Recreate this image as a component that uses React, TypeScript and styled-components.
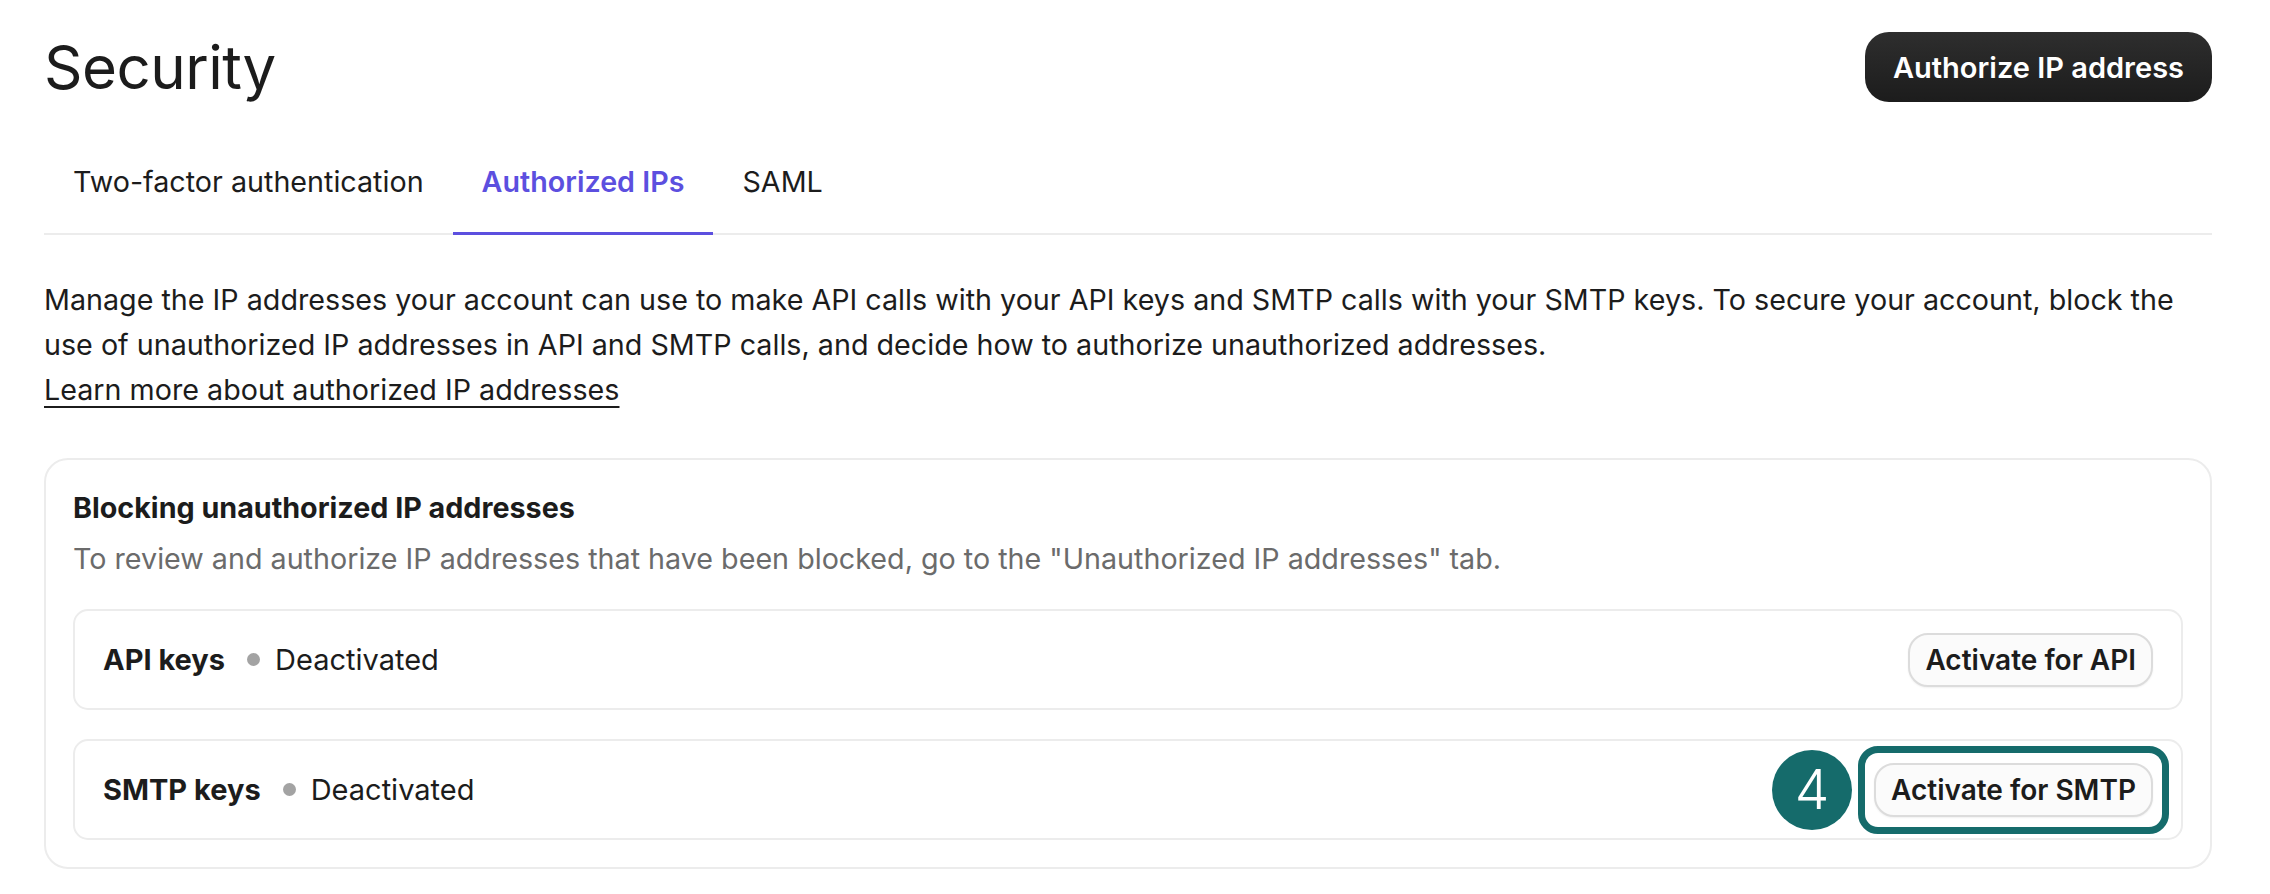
import React from 'react'
import styled, { createGlobalStyle } from 'styled-components'

const GlobalStyle = createGlobalStyle`
  html, body {
    margin: 0;
    padding: 0;
    background: #ffffff;
  }
  body {
    font-family: Inter, 'Noto Sans', 'Liberation Sans', sans-serif;
    color: #1c1c1c;
    -webkit-font-smoothing: antialiased;
  }
  * {
    box-sizing: border-box;
  }
`

const teal = '#156b6b'
const purple = '#5c4fdf'
const textSize = '28.7px'

interface TabProps {
  $active?: boolean
}

interface KeyRowProps {
  label: string
  status: string
  action: string
  step?: number
}

const tabs = ['Two-factor authentication', 'Authorized IPs', 'SAML']

const keyRows: KeyRowProps[] = [
  { label: 'API keys', status: 'Deactivated', action: 'Activate for API' },
  { label: 'SMTP keys', status: 'Deactivated', action: 'Activate for SMTP', step: 4 },
]

const KeyRow: React.FC<KeyRowProps> = ({ label, status, action, step }) => {
  return (
    <StyledRow>
      <StyledRowInfo>
        <StyledRowLabel>{label}</StyledRowLabel>
        <StyledDot />
        <StyledStatus>{status}</StyledStatus>
      </StyledRowInfo>
      <StyledActionWrap>
        {step !== undefined && (
          <>
            <StyledStepBadge>{step}</StyledStepBadge>
            <StyledHighlight />
          </>
        )}
        <StyledSecondaryButton>{action}</StyledSecondaryButton>
      </StyledActionWrap>
    </StyledRow>
  )
}

const App: React.FC = () => {
  return (
    <StyledPage>
      <GlobalStyle />
      <StyledHeader>
        <StyledTitle>Security</StyledTitle>
        <StyledPrimaryButton>Authorize IP address</StyledPrimaryButton>
      </StyledHeader>

      <StyledTabs>
        {tabs.map((tab) => (
          <StyledTab key={tab} $active={tab === 'Authorized IPs'}>
            {tab}
          </StyledTab>
        ))}
      </StyledTabs>

      <StyledIntro>
        Manage the IP addresses your account can use to make API calls with your API keys and SMTP
        calls with your SMTP keys. To secure your account, block the use of unauthorized IP
        addresses in API and SMTP calls, and decide how to authorize unauthorized addresses.
      </StyledIntro>
      <StyledLink href="#">Learn more about authorized IP addresses</StyledLink>

      <StyledCard>
        <StyledCardTitle>Blocking unauthorized IP addresses</StyledCardTitle>
        <StyledCardSubtitle>
          To review and authorize IP addresses that have been blocked, go to the "Unauthorized IP
          addresses" tab.
        </StyledCardSubtitle>
        <StyledRows>
          {keyRows.map((row) => (
            <KeyRow key={row.label} {...row} />
          ))}
        </StyledRows>
      </StyledCard>
    </StyledPage>
  )
}

const StyledPage = styled.div`
  padding: 32px 58px 0 44px;
`

const StyledHeader = styled.div`
  align-items: center;
  display: flex;
  justify-content: space-between;
  height: 70px;
`

const StyledTitle = styled.h1`
  font-size: 60px;
  font-weight: 400;
  letter-spacing: -0.5px;
  line-height: 70px;
  margin: 0;
`

const StyledPrimaryButton = styled.button`
  background: linear-gradient(180deg, #2e2e2e 0%, #1c1c1c 100%);
  border: none;
  border-radius: 24px;
  color: #ffffff;
  font-family: inherit;
  font-size: 29px;
  font-weight: 600;
  height: 70px;
  padding: 0 28px;
`

const StyledTabs = styled.div`
  border-bottom: 2px solid #ececec;
  display: flex;
  margin-top: 28px;
`

const StyledTab = styled.div<TabProps>`
  color: ${(props) => (props.$active ? purple : '#1c1c1c')};
  font-size: ${textSize};
  font-weight: ${(props) => (props.$active ? 600 : 400)};
  line-height: 40px;
  margin-bottom: -2px;
  padding: 32px 29px 30px;
  border-bottom: 3px solid ${(props) => (props.$active ? purple : 'transparent')};
`

const StyledIntro = styled.p`
  font-size: ${textSize};
  line-height: 45px;
  margin: 42px 0 0;
`

const StyledLink = styled.a`
  color: #1c1c1c;
  display: inline-block;
  font-size: ${textSize};
  line-height: 46px;
  text-decoration: underline;
  text-underline-offset: 6px;
  text-decoration-thickness: 2px;
`

const StyledCard = styled.div`
  border: 2px solid #ececec;
  border-radius: 24px;
  margin-top: 45px;
  padding: 28px 27px 27px;
`

const StyledCardTitle = styled.h3`
  font-size: ${textSize};
  font-weight: 700;
  line-height: 40px;
  margin: 0 0 8px;
`

const StyledCardSubtitle = styled.p`
  color: #6b6b6b;
  font-size: ${textSize};
  line-height: 45px;
  margin: 0;
`

const StyledRows = styled.div`
  display: flex;
  flex-direction: column;
  gap: 29px;
  margin-top: 28px;
`

const StyledRow = styled.div`
  align-items: center;
  border: 2px solid #ececec;
  border-radius: 15px;
  display: flex;
  height: 101px;
  justify-content: space-between;
  padding: 0 28px;
`

const StyledRowInfo = styled.div`
  align-items: center;
  display: flex;
  font-size: 29px;
`

const StyledRowLabel = styled.span`
  font-weight: 700;
  margin-right: 22px;
`

const StyledDot = styled.span`
  background: #a3a3a3;
  border-radius: 50%;
  height: 13px;
  margin-right: 15px;
  width: 13px;
`

const StyledStatus = styled.span`
  font-weight: 400;
`

const StyledActionWrap = styled.div`
  position: relative;
`

const StyledSecondaryButton = styled.button`
  background: #fbfbfb;
  border: 2px solid #dcdcdc;
  border-radius: 20px;
  box-shadow: 0 1px 2px rgba(0, 0, 0, 0.06);
  color: #1c1c1c;
  display: block;
  font-family: inherit;
  font-size: 28px;
  font-weight: 600;
  height: 54px;
  padding: 0 15px;
  position: relative;
`

const StyledHighlight = styled.div`
  border: 7px solid ${teal};
  border-radius: 20px;
  bottom: -17px;
  left: -16px;
  pointer-events: none;
  position: absolute;
  right: -16px;
  top: -17px;
`

const StyledStepBadge = styled.div`
  align-items: center;
  background: ${teal};
  border-radius: 50%;
  color: #ffffff;
  display: flex;
  font-size: 55px;
  font-weight: 300;
  height: 80px;
  justify-content: center;
  left: -102px;
  line-height: 1;
  position: absolute;
  top: 50%;
  transform: translateY(-50%);
  width: 80px;
`

export default App
